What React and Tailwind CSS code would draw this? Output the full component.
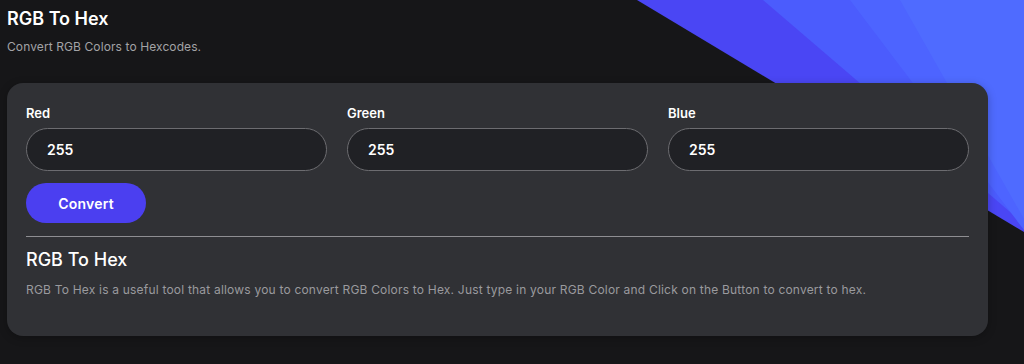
import React, { useState } from "react";

function Backdrop() {
  return (
    <svg
      className="absolute inset-0 pointer-events-none"
      width="1024"
      height="364"
      viewBox="0 0 1024 364"
    >
      <polygon points="637,0 1024,0 1024,232" fill="#4a46f4" />
      <polygon points="763,0 1024,0 1024,224" fill="#4b5cfd" />
      <polygon points="850,0 1024,0 1024,230" fill="#4d64ff" />
      <polygon points="900,0 1024,0 1024,219" fill="#4f6bff" />
    </svg>
  );
}

function ColorField({ label, value, onChange }) {
  return (
    <div className="flex flex-col">
      <label className="text-[13px] leading-5 font-semibold text-white">{label}</label>
      <input
        type="text"
        value={value}
        onChange={(e) => onChange(e.target.value)}
        className="mt-[5px] h-[43px] w-full rounded-full border border-[#6c6c70] bg-[#202125] px-5 text-[14px] font-semibold text-white outline-none"
      />
    </div>
  );
}

export default function App() {
  const [rgb, setRgb] = useState({ r: "255", g: "255", b: "255" });
  const [hex, setHex] = useState("");

  const convert = () => {
    const toHex = (v) => Math.max(0, Math.min(255, parseInt(v) || 0)).toString(16).padStart(2, "0");
    setHex("#" + toHex(rgb.r) + toHex(rgb.g) + toHex(rgb.b));
  };

  return (
    <div
      className="relative w-[1024px] h-[364px] overflow-hidden bg-[#161618]"
      style={{ fontFamily: "Inter, 'Noto Sans', sans-serif" }}
    >
      <Backdrop />
      <div className="relative px-[7px] pt-[5px]">
        <h1 className="text-[18px] leading-7 font-semibold text-white">RGB To Hex</h1>
        <p className="mt-[6px] text-[12px] leading-4 tracking-[0.1px] text-[#a3a3a6]">Convert RGB Colors to Hexcodes.</p>

        <div className="mt-[28px] w-[981px] rounded-2xl bg-[#303135] px-[19px] pt-5 pb-9 shadow-[0_2px_8px_rgba(0,0,0,0.25)]">
          <div className="grid grid-cols-3 gap-5">
            <ColorField label="Red" value={rgb.r} onChange={(v) => setRgb({ ...rgb, r: v })} />
            <ColorField label="Green" value={rgb.g} onChange={(v) => setRgb({ ...rgb, g: v })} />
            <ColorField label="Blue" value={rgb.b} onChange={(v) => setRgb({ ...rgb, b: v })} />
          </div>
          <button
            onClick={convert}
            title={hex}
            className="mt-3 h-10 w-[120px] rounded-full bg-[#4b3ff0] text-[14px] font-semibold tracking-[0.2px] text-white"
          >
            Convert
          </button>
          <div className="mt-[13px] h-px bg-[#8e8e92]" />
          <h2 className="mt-[9px] text-[18px] leading-7 font-medium text-white">RGB To Hex</h2>
          <p className="mt-[6px] text-[12px] leading-5 tracking-[0.2px] text-[#9a9a9e]">
            RGB To Hex is a useful tool that allows you to convert RGB Colors to Hex. Just type in your RGB Color and Click on the Button to convert to hex.
          </p>
        </div>
      </div>
    </div>
  );
}
